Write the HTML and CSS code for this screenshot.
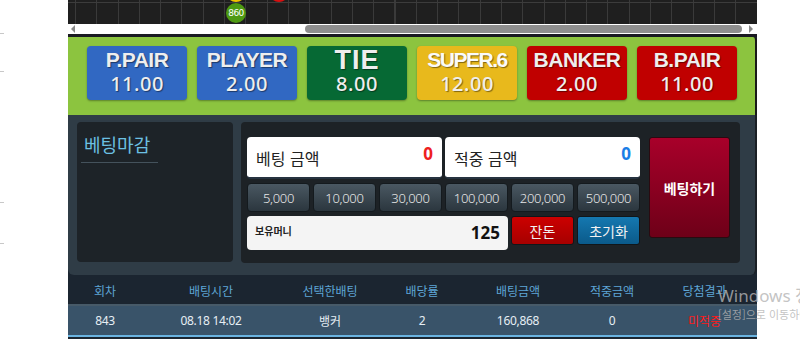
FILE: index.html
```html
<!DOCTYPE html>
<html lang="ko">
<head>
<meta charset="utf-8">
<link rel="stylesheet" href="styles.css">
</head>
<body>
<div class="page">
  <div class="gutter">
    <span class="tick t1"></span>
    <span class="tick t2"></span>
    <span class="tick t3"></span>
    <span class="tick t4"></span>
  </div>
  <div class="app">
    <div class="road">
      <span class="bead yellow" style="left:158px;top:-18px"></span>
      <span class="bead red" style="left:201px;top:-18px"></span>
      <span class="bead green" style="left:158px;top:3px">860</span>
    </div>
    <div class="scroll">
      <span class="arrow left"></span>
      <span class="thumb"></span>
      <span class="arrow right"></span>
    </div>
    <div class="sep"></div>
    <div class="bets">
      <div class="bet blue"><span class="name">P.PAIR</span><span class="odds">11.00</span></div>
      <div class="bet blue"><span class="name">PLAYER</span><span class="odds">2.00</span></div>
      <div class="bet green"><span class="name big">TIE</span><span class="odds">8.00</span></div>
      <div class="bet yellow"><span class="name s6">SUPER.6</span><span class="odds">12.00</span></div>
      <div class="bet red"><span class="name">BANKER</span><span class="odds">2.00</span></div>
      <div class="bet red"><span class="name">B.PAIR</span><span class="odds">11.00</span></div>
    </div>
    <div class="panel">
      <div class="status">
        <div class="status-title">베팅마감</div>
      </div>
      <div class="form">
        <div class="grid">
          <div class="field wide"><span class="label">베팅 금액</span><span class="val red-t">0</span></div>
          <div class="field wide"><span class="label">적중 금액</span><span class="val blue-t">0</span></div>
          <button class="chip">5,000</button>
          <button class="chip">10,000</button>
          <button class="chip">30,000</button>
          <button class="chip">100,000</button>
          <button class="chip">200,000</button>
          <button class="chip">500,000</button>
          <div class="money"><span class="mlabel">보유머니</span><span class="mval">125</span></div>
          <button class="act change">잔돈</button>
          <button class="act reset">초기화</button>
        </div>
        <button class="place">베팅하기</button>
      </div>
    </div>
    <div class="table">
      <div class="thead">
        <span class="c1">회차</span><span class="c2">배팅시간</span><span class="c3">선택한배팅</span><span class="c4">배당률</span><span class="c5">배팅금액</span><span class="c6">적중금액</span><span class="c7">당첨결과</span>
      </div>
      <div class="trow">
        <span class="c1">843</span><span class="c2">08.18 14:02</span><span class="c3">뱅커</span><span class="c4">2</span><span class="c5">160,868</span><span class="c6">0</span><span class="c7 miss">미적중</span>
      </div>
    </div>
  </div>
  <div class="watermark">
    <div class="wm1">Windows 정품 인증</div>
    <div class="wm2">[설정]으로 이동하여 Windows를 정품 인증합니다.</div>
  </div>
</div>
</body>
</html>
```

FILE: styles.css
```css
* { box-sizing: border-box; }
html, body { margin: 0; padding: 0; background: #fff; }
body { font-family: "Noto Sans CJK KR", "Noto Sans", sans-serif; overflow: hidden; width: 800px; height: 339px; }

.page { position: relative; display: flex; width: 800px; height: 339px; overflow: hidden; }

.gutter { width: 68px; flex: none; display: flex; flex-direction: column; }
.tick { display: block; width: 4px; height: 1px; background: #c8c8c8; }
.t1 { margin-top: 33px; }
.t2 { margin-top: 37px; }
.t3 { margin-top: 130px; }
.t4 { margin-top: 40px; }

.app { width: 689px; flex: none; background: #1b2530; display: flex; flex-direction: column; }

.road {
  position: relative; height: 24px; overflow: hidden;
  background-color: #1f1f1f;
  background-image:
    linear-gradient(#3c3c3c, #3c3c3c),
    repeating-linear-gradient(90deg, transparent 0 7px, #3a3a3a 7px 8px, transparent 8px 21.3px);
  background-size: 100% 1px, 100% 100%;
  background-position: 0 2px, 0 0;
  background-repeat: no-repeat, repeat;
}
.bead { position: absolute; width: 20px; height: 20px; border-radius: 50%; color: #fff; font: 9px/20px "DejaVu Sans", sans-serif; text-align: center; letter-spacing: -0.5px; }
.bead.green { background: #4e9a12; }
.bead.yellow { background: #f0c400; }
.bead.red { background: #d81010; }

.scroll { height: 10px; background: #fff; display: flex; align-items: center; padding: 0 3px; }
.thumb { margin-left: 230px; width: 437px; height: 8px; border-radius: 4px; background: #8e8e8e; }
.arrow { width: 0; height: 0; border-top: 4px solid transparent; border-bottom: 4px solid transparent; }
.arrow.left { border-right: 4px solid #8a8a8a; }
.arrow.right { border-left: 4px solid #8a8a8a; margin-left: 7px; }

.sep { height: 3px; background: #1a1a22; }

.bets {
  height: 78px; background: #8cc43f; display: flex; gap: 10px;
  padding: 9px 0 0 19px; border-right: 2px solid #1a1a1a; border-top-right-radius: 4px;
}
.bet {
  width: 100px; height: 54px; border-radius: 4px; display: flex; flex-direction: column; align-items: center;
  color: #eeeeee; box-shadow: 0 1px 2px rgba(0,0,0,0.35);
  text-shadow: 1px 1px 1px rgba(0,0,0,0.45);
}
.bet.blue { background: #3168c2; }
.bet.green { background: #066934; }
.bet.yellow { background: #e8b91c; }
.bet.red { background: #c00000; }
.name { font: bold 21px/26px "Liberation Sans", Arial, sans-serif; letter-spacing: -0.5px; margin-top: 1px; height: 26px; }
.name.big { font-size: 27px; line-height: 26px; letter-spacing: 1px; }
.name.s6 { letter-spacing: -1.5px; color: #fafafa; }
.odds { font: 500 20px/22px "Noto Sans", sans-serif; letter-spacing: 0.5px; }

.panel {
  height: 160px; background: #2f3c46; display: flex; gap: 8px; padding: 7px 15px 0 9px;
  border-right: 2px solid #1a1f24; border-radius: 0 0 6px 6px;
}
.status { width: 156px; height: 140px; background: #1d2328; border-radius: 4px; padding: 10px 0 0 4px; }
.status-title { width: 77px; color: #6cc0e2; font-size: 18px; line-height: 24px; padding: 0 0 6px 3px; border-bottom: 1px solid #44525c; }

.form { flex: 1; height: 141px; background: #1d2226; border-radius: 4px; display: flex; gap: 7px; padding: 15px 0 0 6px; }
.grid { width: 395px; display: grid; grid-template-columns: repeat(6, 63px); grid-template-rows: 42px 29px 34px; gap: 4px 3px; align-content: start; }
.field { grid-column: span 3; background: #fff; border-radius: 4px; display: flex; justify-content: space-between; align-items: flex-start; padding: 0 9px; border-bottom: 2px solid #263340; }
.label { font-size: 16px; color: #222; margin-top: 9px; }
.val { font: bold 17px/20px "Noto Sans", sans-serif; margin-top: 7px; }
.red-t { color: #ee2020; }
.blue-t { color: #1a7ee6; }
.chip {
  font: 300 13px "Noto Sans", sans-serif; color: #e8e8e8; border: 1px solid #141a1e; border-radius: 4px; padding: 0;
  background: linear-gradient(#4a5862, #2b363e); letter-spacing: -0.3px;
}
.money { grid-column: span 4; background: #f4f4f4; border-radius: 4px; display: flex; justify-content: space-between; padding: 0 8px 0 8px; }
.mlabel { font-size: 10px; font-weight: bold; color: #222; margin-top: 7px; }
.mval { font: bold 17px/20px "Noto Sans", sans-serif; color: #111; margin-top: 7px; }
.act { height: 29px; border: 1px solid #10161a; border-radius: 3px; color: #f2f2f2; font-size: 14px; font-family: "Noto Sans CJK KR", sans-serif; padding: 0; }
.act.change { background: linear-gradient(#cc0000, #a60000); }
.act.reset { background: linear-gradient(#1578b0, #0b5a8a); }
.place {
  width: 81px; height: 101px; border: 1px solid #2a0a10; border-radius: 3px; padding: 0;
  background: linear-gradient(#a8002a, #6e0018); color: #fff; font-size: 14px; font-weight: bold;
  font-family: "Noto Sans CJK KR", sans-serif;
}

.table { margin-top: 2px; }
.thead, .trow { display: flex; align-items: center; font-size: 12px; }
.thead { height: 29px; background: #1b2530; color: #5ea6d6; border-bottom: 2px solid #475a68; }
.trow { height: 31px; background: #395369; color: #e6eef4; border-bottom: 2px solid #6ab3e0; }
.thead span, .trow span { text-align: center; flex: none; }
.c1 { width: 74px; }
.c2 { width: 138px; }
.c3 { width: 100px; }
.c4 { width: 84px; }
.c5 { width: 108px; }
.c6 { width: 80px; }
.c7 { width: 105px; }
.trow .c2, .trow .c1, .trow .c4, .trow .c5, .trow .c6 { font-family: "Noto Sans", sans-serif; font-size: 12px; letter-spacing: -0.3px; }
.miss { color: #ff1a1a; }

.watermark { position: absolute; left: 718px; top: 286px; width: 82px; overflow: hidden; white-space: nowrap; color: rgba(180,180,180,0.8); }
.wm1 { font: 17px/20px "Noto Sans", "Noto Sans CJK KR", sans-serif; }
.wm2 { font-size: 11px; line-height: 16px; }
```
